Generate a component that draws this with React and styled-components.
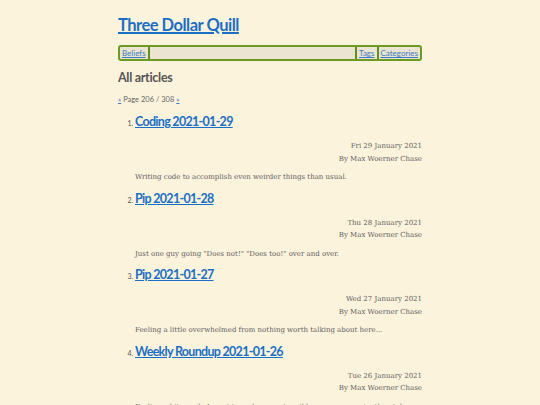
import styled, { createGlobalStyle } from 'styled-components'

const GlobalStyle = createGlobalStyle`
  html, body {
    margin: 0;
    padding: 0;
    background: #fcf3dc;
  }
  body {
    font-family: "Lato", "DejaVu Sans", sans-serif;
    color: #555;
  }
`

const Page = styled.div`
  width: 304px;
  margin: 0 auto;
  padding-top: 14px;
`

const SiteTitle = styled.h1`
  margin: 0;
  font-family: "Lato", sans-serif;
  font-size: 16.5px;
  font-weight: 700;
  line-height: 22px;
  letter-spacing: -0.5px;

  a {
    color: #1a6fc4;
    text-decoration: underline;
    text-decoration-thickness: 1.5px;
  }
`

const Nav = styled.nav`
  margin-top: 9px;
  display: flex;
  align-items: stretch;
  height: 12px;
  border: 2px solid #6b9b22;
  border-radius: 3px;
  background: #ebe4d1;
  font-family: "Lato", sans-serif;
  font-size: 8px;
  line-height: 12px;
`

const NavLink = styled.a`
  color: #3a7cc2;
  text-decoration: underline;
  padding: 0 2px;
`

const NavSep = styled.span`
  width: 2px;
  background: #5f9018;
`

const NavSpacer = styled.span`
  flex: 1;
`

const Heading = styled.h2`
  margin: 9px 0 0;
  font-family: "Lato", sans-serif;
  font-size: 12.5px;
  font-weight: 700;
  line-height: 16px;
  letter-spacing: -0.3px;
  color: #555;
`

const Pager = styled.p`
  margin: 9px 0 0;
  font-family: "Lato", sans-serif;
  font-size: 7.5px;
  line-height: 10px;
  color: #666;

  a {
    color: #3a7cc2;
  }
`

const List = styled.ol`
  margin: 9px 0 0;
  padding-left: 17px;
  font-size: 7px;
`

const Item = styled.li`
  margin-bottom: 7.6px;

  &::marker {
    font-family: "Lato", sans-serif;
    color: #555;
  }
`

const ItemTitle = styled.h3`
  margin: 0;
  display: inline;
  font-family: "Lato", sans-serif;
  font-size: 12.5px;
  font-weight: 700;
  line-height: 16px;
  letter-spacing: -0.7px;

  a {
    color: #1a6fc4;
    text-decoration: underline;
  }
`

const Meta = styled.div`
  margin-top: 10px;
  text-align: right;
  font-family: "DejaVu Serif", serif;
  font-size: 7px;
  line-height: 12.5px;
  color: #5e5e5e;
`

const Summary = styled.p`
  margin: 6px 0 0;
  font-family: "DejaVu Serif", serif;
  font-size: 7px;
  line-height: 12px;
  color: #5e5e5e;
`

const articles = [
  {
    title: 'Coding 2021-01-29',
    date: 'Fri 29 January 2021',
    summary: 'Writing code to accomplish even weirder things than usual.',
  },
  {
    title: 'Pip 2021-01-28',
    date: 'Thu 28 January 2021',
    summary: 'Just one guy going "Does not!" "Does too!" over and over.',
  },
  {
    title: 'Pip 2021-01-27',
    date: 'Wed 27 January 2021',
    summary: 'Feeling a little overwhelmed from nothing worth talking about here...',
  },
  {
    title: 'Weekly Roundup 2021-01-26',
    date: 'Tue 26 January 2021',
    summary:
      'Feeling a bit rough. I want to make some tangible progress on pip, then take a break from it for a bit.',
  },
]

export default function App() {
  return (
    <>
      <GlobalStyle />
      <Page>
        <SiteTitle>
          <a href="#">Three Dollar Quill</a>
        </SiteTitle>
        <Nav>
          <NavLink href="#">Beliefs</NavLink>
          <NavSep />
          <NavSpacer />
          <NavSep />
          <NavLink href="#">Tags</NavLink>
          <NavSep />
          <NavLink href="#">Categories</NavLink>
        </Nav>
        <Heading>All articles</Heading>
        <Pager>
          <a href="#">«</a> Page 206 / 308 <a href="#">»</a>
        </Pager>
        <List>
          {articles.map((a) => (
            <Item key={a.title}>
              <ItemTitle>
                <a href="#">{a.title}</a>
              </ItemTitle>
              <Meta>
                {a.date}
                <br />
                By Max Woerner Chase
              </Meta>
              <Summary>{a.summary}</Summary>
            </Item>
          ))}
        </List>
      </Page>
    </>
  )
}
